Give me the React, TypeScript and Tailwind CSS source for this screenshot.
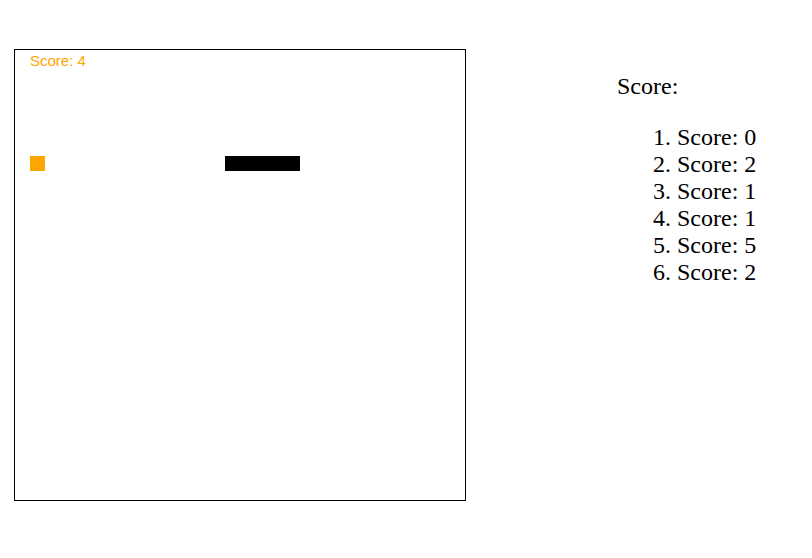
import React from 'react';

const scores = [0, 2, 1, 1, 5, 2];

const GameBoard: React.FC = () => (
  <div className="mt-[49px] ml-[14px] w-[452px] h-[452px] border border-black shrink-0">
    <div className="relative w-full h-full">
      <div
        className="absolute left-[15px] top-[3px] text-[15px] leading-[15px] text-[#ffa500]"
        style={{ fontFamily: '"Liberation Sans", Arial, sans-serif' }}
      >
        Score: 4
      </div>
      <div className="absolute left-[15px] top-[106px] w-[15px] h-[15px] bg-[#ffa500]" />
      <div className="absolute left-[210px] top-[106px] w-[75px] h-[15px] bg-black" />
    </div>
  </div>
);

const ScoreBoard: React.FC = () => (
  <div
    className="ml-[151px] mt-[73px] text-[24px] leading-[27px] text-black"
    style={{ fontFamily: '"Liberation Serif", "Times New Roman", serif' }}
  >
    <p>Score:</p>
    <ol className="list-decimal pl-[60px] mt-[24px]">
      {scores.map((s, i) => (
        <li key={i}>Score: {s}</li>
      ))}
    </ol>
  </div>
);

export default function App() {
  return (
    <div className="flex items-start w-[812px] h-[558px] bg-white">
      <GameBoard />
      <ScoreBoard />
    </div>
  );
}
